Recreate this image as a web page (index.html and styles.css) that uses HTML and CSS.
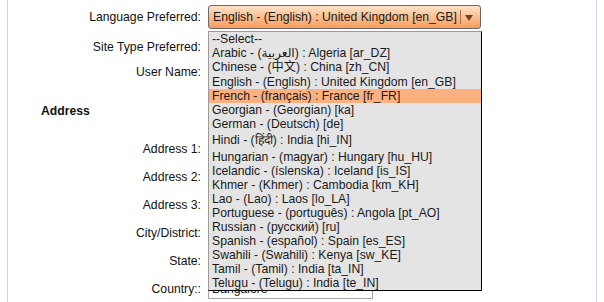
FILE: index.html
```html
<!DOCTYPE html>
<html>
<head>
<meta charset="utf-8">
<link rel="stylesheet" href="styles.css">
</head>
<body>
<div class="page">
  <div class="form">
    <div class="row r1">
      <span class="lbl">Language Preferred:</span>
      <div class="field">
        <div class="select">
          <span class="sel-text">English - (English) : United Kingdom [en_GB]</span>
          <span class="sel-btn"><span class="sep"></span><span class="arrow"></span></span>
          <ul class="dropdown">
            <li>--Select--</li>
            <li>Arabic - (العربية) : Algeria [ar_DZ]</li>
            <li class="zh">Chinese - (中文) : China [zh_CN]</li>
            <li>English - (English) : United Kingdom [en_GB]</li>
            <li class="hl">French - (français) : France [fr_FR]</li>
            <li>Georgian - (Georgian) [ka]</li>
            <li>German - (Deutsch) [de]</li>
            <li class="hi">Hindi - (हिंदी) : India [hi_IN]</li>
            <li>Hungarian - (magyar) : Hungary [hu_HU]</li>
            <li>Icelandic - (íslenska) : Iceland [is_IS]</li>
            <li>Khmer - (Khmer) : Cambodia [km_KH]</li>
            <li>Lao - (Lao) : Laos [lo_LA]</li>
            <li>Portuguese - (português) : Angola [pt_AO]</li>
            <li>Russian - (русский) [ru]</li>
            <li>Spanish - (español) : Spain [es_ES]</li>
            <li>Swahili - (Swahili) : Kenya [sw_KE]</li>
            <li>Tamil - (Tamil) : India [ta_IN]</li>
            <li>Telugu - (Telugu) : India [te_IN]</li>
          </ul>
        </div>
      </div>
    </div>
    <div class="row r2">
      <span class="lbl">Site Type Preferred:</span>
      <div class="field"><div class="input"></div></div>
    </div>
    <div class="row r3">
      <span class="lbl">User Name:</span>
      <div class="field"><div class="input"></div></div>
    </div>
    <div class="heading">Address</div>
    <div class="addr-gap"></div>
    <div class="row ra">
      <span class="lbl">Address 1:</span>
      <div class="field"><div class="input"></div></div>
    </div>
    <div class="row ra">
      <span class="lbl">Address 2:</span>
      <div class="field"><div class="input"></div></div>
    </div>
    <div class="row ra">
      <span class="lbl">Address 3:</span>
      <div class="field"><div class="input"></div></div>
    </div>
    <div class="row ra">
      <span class="lbl">City/District:</span>
      <div class="field"><div class="input"></div></div>
    </div>
    <div class="row ra">
      <span class="lbl">State:</span>
      <div class="field"><div class="input"></div></div>
    </div>
    <div class="row ra">
      <span class="lbl">Country::</span>
      <div class="field"><div class="input">Bangalore</div></div>
    </div>
  </div>
</div>
</body>
</html>
```
FILE: styles.css
```css
body {
  margin: 0;
  background: #fff;
  font-family: "Liberation Sans", Arial, "DejaVu Sans", "Noto Sans CJK SC", sans-serif;
  font-size: 12.2px;
  color: #111;
}

.page {
  margin-left: 7px;
  width: 588px;
  height: 302px;
  border-left: 1px solid #cdd8e5;
  border-right: 1px solid #cdd8e5;
  overflow: hidden;
}

.form {
  display: flex;
  flex-direction: column;
}

.row {
  display: grid;
  grid-template-columns: 193px 1fr;
  column-gap: 7px;
  align-items: center;
}

.lbl {
  text-align: right;
  white-space: nowrap;
}

.r1 { height: 34px; }
.r2 { height: 26px; }
.r3 { height: 24px; }
.ra { height: 28px; }

.heading {
  margin-top: 14px;
  height: 26px;
  display: flex;
  align-items: center;
  padding-left: 33px;
  font-weight: bold;
}

.addr-gap { height: 11px; }

.field {
  display: flex;
  align-items: center;
}

.input {
  width: 165px;
  height: 20px;
  box-sizing: border-box;
  border: 1px solid #a5a5a5;
  background: #fff;
  padding: 0 3px;
  line-height: 18px;
  color: #111;
}

.select {
  position: relative;
  width: 273px;
  height: 24px;
  box-sizing: border-box;
  border: 1px solid #6a6a6a;
  border-radius: 3px;
  background: linear-gradient(#fde2c6, #f89c5b);
  display: flex;
  align-items: center;
  color: #1a1a1a;
}

.sel-text {
  flex: 1;
  padding-left: 4px;
  white-space: nowrap;
  overflow: hidden;
}

.sel-btn {
  width: 20px;
  height: 100%;
  display: flex;
  align-items: center;
}

.sep {
  width: 1px;
  height: 14px;
  background: #a9704c;
}

.arrow {
  margin-left: 4px;
  margin-top: 2px;
  width: 0;
  height: 0;
  border-left: 4px solid transparent;
  border-right: 4px solid transparent;
  border-top: 6px solid #7c3c2c;
}

.dropdown {
  position: absolute;
  left: -1px;
  top: 25px;
  width: 274px;
  box-sizing: border-box;
  margin: 0;
  padding: 0;
  list-style: none;
  background: #e4e4e4;
  border: 1px solid;
  border-color: #9a9a9a #000 #000 #9a9a9a;
  z-index: 5;
}

.dropdown li {
  height: 14px;
  line-height: 14px;
  padding-left: 3px;
  white-space: nowrap;
  color: #1a1a1a;
  overflow: hidden;
}

.dropdown li.zh {
  height: 15px;
  line-height: 15px;
}

.dropdown li.hi {
  height: 19px;
  line-height: 19px;
}

.dropdown li.hl {
  background: #fbb07f;
}
```
